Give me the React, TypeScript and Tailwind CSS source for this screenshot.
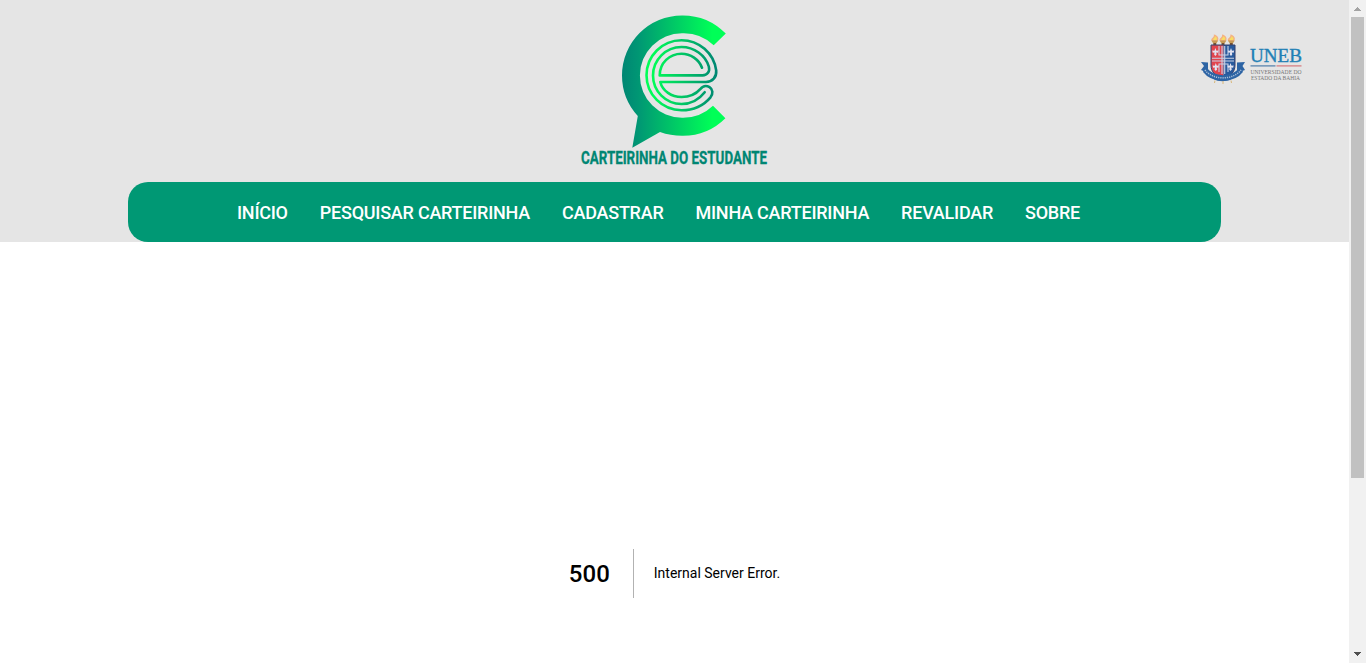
import React from "react";

const NAV_ITEMS = ["INÍCIO", "PESQUISAR CARTEIRINHA", "CADASTRAR", "MINHA CARTEIRINHA", "REVALIDAR", "SOBRE"];

function StudentCardLogo() {
  return (
    <svg className="overflow-visible" width="190" height="160" viewBox="579 10 190 160" role="img" aria-label="Carteirinha do Estudante">
      <defs>
        <linearGradient id="bubble" gradientUnits="userSpaceOnUse" x1="622" y1="0" x2="726" y2="0">
          <stop offset="0" stopColor="#008673" />
          <stop offset="0.15" stopColor="#009674" />
          <stop offset="0.87" stopColor="#00ff57" />
          <stop offset="1" stopColor="#00ff57" />
        </linearGradient>
        <linearGradient id="letter" gradientUnits="userSpaceOnUse" x1="646" y1="0" x2="717" y2="0">
          <stop offset="0" stopColor="#00ff57" />
          <stop offset="0.12" stopColor="#00fb58" />
          <stop offset="1" stopColor="#008673" />
        </linearGradient>
      </defs>
      <path
        fill="url(#bubble)"
        d="M725.8 33.6A60.2 60.2 0 0 0 682 15.4A60.1 60.1 0 0 0 622 75.5A60.2 60.2 0 0 0 637.8 116L632.3 147.8L660 132C667 134.6 674.5 135.8 682 135.8A60.2 60.2 0 0 0 725.4 118.3L713 105.7A43.5 43.5 0 0 1 682 117.7A42.1 42.2 0 0 1 682 33.3A43.5 43.5 0 0 1 713.7 45.3Z"
      />
      <g fill="none" stroke="url(#letter)" strokeWidth="2.6" strokeLinecap="round" strokeLinejoin="round">
        <path d="M704.7 92.2C699 99.5 691 104 681.5 104A28.5 28.5 0 0 1 681.5 47C694 47 705.5 55 708.8 66.5C710.2 71.5 707.4 75.4 702.5 75.4H659.7C659.7 63 669.5 53.7 681.5 53.7C690.5 53.7 699 59.3 702 67.7" />
        <path d="M660.3 82H706C712.5 82 716.8 77 716.2 70.5A35 35 0 0 0 681.5 40.2A35 35 0 0 0 681.5 110.2C693 110.2 703.5 105.7 710.5 97.3C713.4 93.5 712.8 89.3 709.5 87.2C706.2 85.2 702.7 86 700.2 89.2C695.7 94.5 689.5 97 681.5 97C671.5 97 662.5 91 660.3 82Z" />
      </g>
      <text
        x="581"
        y="164"
        fill="#008673"
        stroke="#008673"
        strokeWidth="0.3"
        fontFamily="Roboto, sans-serif"
        fontSize="18"
        fontWeight="700"
        textLength="186"
        lengthAdjust="spacingAndGlyphs"
      >
        CARTEIRINHA DO ESTUDANTE
      </text>
    </svg>
  );
}

function Torch({ x }: { x: number }) {
  return (
    <g transform={`translate(${x} 0)`}>
      <path fill="#f4b183" d="M-3 7C-5 4 0 4-1 .5C3 1 5 5 2.5 7Z" />
      <path fill="#f8df62" d="M-1.5 6C-2 4 1 4 0 2C2 3 3 5 1.5 6Z" />
      <path fill="#c79a55" d="M-3.5 6.5H3.5L1.8 9H-1.8Z" />
      <path fill="#77502e" d="M-1.5 9H1.5V11.5H-1.5Z" />
    </g>
  );
}

function Lily({ x, y }: { x: number; y: number }) {
  return (
    <path
      transform={`translate(${x} ${y})`}
      fill="#e3e3f0"
      d="M0-4L1-1.2L3.2-1.5L2.6 .8L.8 .6L1.3 2.6L0 4L-1.3 2.6L-.8 .6L-2.6 .8L-3.2-1.5L-1-1.2Z"
    />
  );
}

function UnebLogo() {
  return (
    <svg className="overflow-visible" width="104" height="52" viewBox="1200 34 104 52" role="img" aria-label="UNEB">
      <g transform="translate(1200 34)">
        <Torch x={14.8} />
        <Torch x={23} />
        <Torch x={31.3} />
        <path fill="#2d64a4" d="M1 28L8 28.5L8 38C18 45 28 45 37 38V28.5L45 28L42.5 32L45 36L38 38.5C32 50 13 50 8 39L1 36L4 32Z" />
        <path fill="#e2454e" d="M11 11H23.5V44C15 42 11 38 11 31Z" />
        <path fill="#285a9d" d="M23.5 11H35V31C35 38 31 42 23.5 44Z" />
        <path fill="none" stroke="#35406f" strokeWidth="1" d="M11 11H35V31C35 38 31 42 23 44C15 42 11 38 11 31Z" />
        <path fill="none" stroke="#c9d2e5" strokeWidth="1.1" d="M22 12V40M24.7 12V40M12 24.3H34M12 27H34M19 12V21H28V12M19 38V30H28V38" />
        <Lily x={15.4} y={18} />
        <Lily x={31} y={18} />
        <Lily x={15.8} y={33} />
        <Lily x={30.5} y={33} />
        <path fill="none" stroke="#2d64a4" strokeWidth="5.5" d="M5 36C13 46.5 33 46.5 41 36" />
        <path fill="none" stroke="#a9bfd9" strokeWidth="1.5" strokeDasharray="1.2 1" d="M5 36C13 46.5 33 46.5 41 36" />
        <path fill="none" stroke="#d8b77a" strokeWidth="1" d="M15 46.5L14.5 49M23 47V50M31 46.5L31.5 49" />
      </g>
      <g fontFamily="Liberation Serif, serif">
        <text x="1250" y="62.3" fontSize="19" fill="#2180b5" stroke="#2180b5" strokeWidth="0.35" textLength="52" lengthAdjust="spacingAndGlyphs">
          UNEB
        </text>
        <g fontSize="5.5" fill="#777777">
          <text x="1250.5" y="73.8" textLength="51" lengthAdjust="spacingAndGlyphs">UNIVERSIDADE DO</text>
          <text x="1251" y="80" textLength="49" lengthAdjust="spacingAndGlyphs">ESTADO DA BAHIA</text>
        </g>
      </g>
      <path stroke="#4e7da9" strokeWidth="1.2" d="M1250.5 65.9H1275.5" />
      <path stroke="#d4777c" strokeWidth="1.2" d="M1276.5 65.9H1301.5" />
    </svg>
  );
}

function Scrollbar() {
  return (
    <div className="flex h-full w-[17px] shrink-0 flex-col items-center bg-[#f1f1f1]" aria-hidden="true">
      <svg className="block shrink-0" width="17" height="17" shapeRendering="crispEdges">
        <path fill="#a3a3a3" d="M8 7H9V8H10V9H11V10H12V11H5V10H6V9H7V8H8Z" />
      </svg>
      <div className="h-[461px] w-[13px] bg-[#c1c1c1]" />
      <svg className="mt-auto block shrink-0" width="17" height="17" shapeRendering="crispEdges">
        <path fill="#505050" d="M5 6H12V7H11V8H10V9H9V10H8V9H7V8H6V7H5Z" />
      </svg>
    </div>
  );
}

export default function App() {
  return (
    <div className="flex h-[663px] w-full overflow-hidden bg-white font-['Roboto',sans-serif]">
      <div className="flex min-w-0 flex-1 flex-col">
        <header className="flex h-[242px] shrink-0 flex-col bg-[#e5e5e5]">
          <div className="grid h-[182px] grid-cols-[579px_190px_1fr] items-start">
            <div />
            <div className="pt-2.5">
              <StudentCardLogo />
            </div>
            <div className="flex justify-end pt-[34px] pr-[45px]">
              <UnebLogo />
            </div>
          </div>
          <nav className="mx-32 flex h-[60px] items-center rounded-[20px] bg-[#009874] pt-0.5 pl-[109px]">
            <ul className="flex gap-8 text-lg font-medium tracking-[-0.238px] whitespace-nowrap text-white">
              {NAV_ITEMS.map((item) => (
                <li key={item}>
                  <a href="#">{item}</a>
                </li>
              ))}
            </ul>
          </nav>
        </header>
        <main className="flex flex-1 justify-center pt-[307px] text-black">
          <div className="flex h-[49px] items-center">
            <h1 className="mr-5 flex h-[49px] items-center border-r border-black/30 pr-[23px] text-2xl font-medium">500</h1>
            <h2 className="pb-0.5 text-sm">Internal Server Error.</h2>
          </div>
        </main>
      </div>
      <Scrollbar />
    </div>
  );
}
